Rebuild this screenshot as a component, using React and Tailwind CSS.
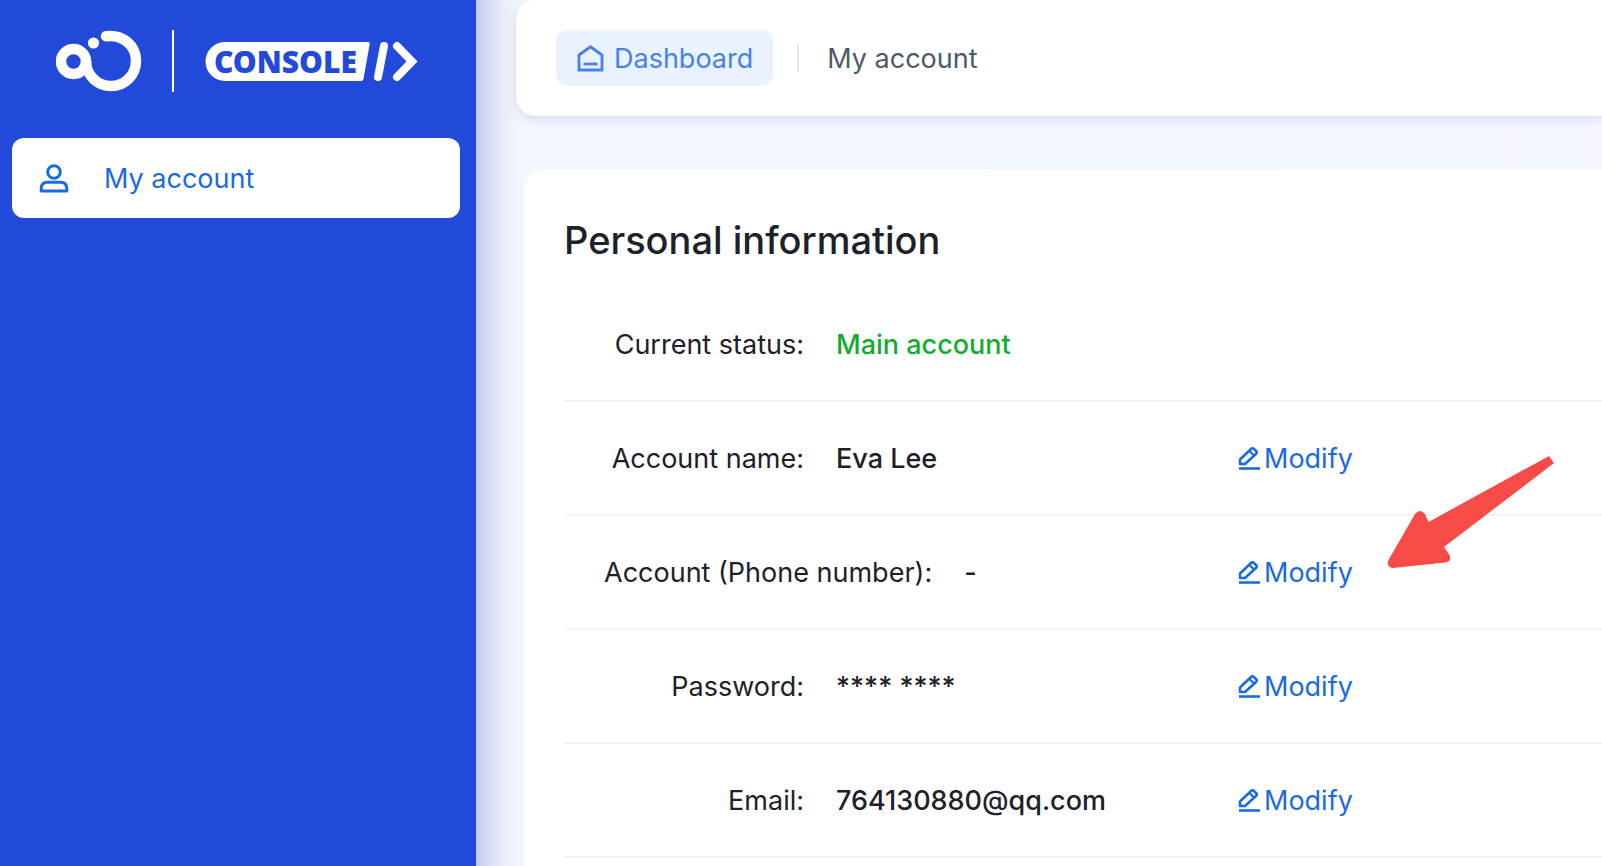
import React from "react";

const LogoMark = () => {
  return (
    <svg width="86" height="62" viewBox="0 0 86 62" fill="none">
      <circle cx="17.5" cy="31.5" r="12.5" stroke="#fff" strokeWidth="10.5" />
      <path
        d="M50 6.2 C67 4.2 80 15.5 80 31 A25 25 0 0 1 30 31"
        stroke="#fff"
        strokeWidth="10.5"
        strokeLinecap="round"
      />
      <circle cx="37.5" cy="13" r="5.6" fill="#fff" />
    </svg>
  );
};

const ConsoleLogo = () => {
  return (
    <svg width="214" height="42" viewBox="0 0 214 42" fill="none">
      <path
        d="M21 2 H164 Q166 2 165.7 4 L159.5 39 Q159 41 157 41 H21 A19.5 19.5 0 0 1 21 2 Z"
        fill="#fff"
      />
      <text
        x="10"
        y="33"
        fontFamily="Noto Sans, sans-serif"
        fontWeight="900"
        fontSize="30"
        fill="#2249da"
      >
        CONSOLE
      </text>
      <path
        d="M180 6 L174 37"
        stroke="#fff"
        strokeWidth="8"
        strokeLinecap="round"
      />
      <path
        d="M193 6 L208 21.5 L193 37"
        stroke="#fff"
        strokeWidth="8"
        strokeLinecap="round"
      />
    </svg>
  );
};

const UserIcon = () => {
  return (
    <svg width="30" height="30" viewBox="0 0 30 30" fill="none" stroke="currentColor" strokeWidth="3">
      <circle cx="15" cy="8" r="6.3" />
      <path d="M2.2 27 V24.5 Q2.2 18.2 8.5 18.2 H21.5 Q27.8 18.2 27.8 24.5 V27 Z" strokeLinejoin="round" />
    </svg>
  );
};

const HomeIcon = () => {
  return (
    <svg width="28" height="28" viewBox="0 0 28 28" fill="none" stroke="currentColor" strokeWidth="2.8">
      <path d="M3 10 L14.5 1.8 L26 10 V25 H3 Z" />
      <path d="M7.5 19 H21.5" />
    </svg>
  );
};

const EditIcon = () => {
  return (
    <svg width="24" height="24" viewBox="0 0 24 24" fill="none" stroke="currentColor" strokeWidth="2.6">
      <path
        d="M2 17 V12.5 L13.3 1.8 Q14.5 0.8 15.7 1.8 L18.2 4.2 Q19.3 5.5 18.2 6.7 L7 17 Z"
        strokeLinejoin="round"
      />
      <path d="M11.5 4 L16 8.5" strokeWidth="2.2" />
      <path d="M1 21.5 H22" />
    </svg>
  );
};

const rows = [
  { label: "Current status", value: "Main account", status: true },
  { label: "Account name", value: "Eva Lee", editable: true },
  { label: "Account (Phone number)", value: "-", editable: true },
  { label: "Password", value: "**** ****", editable: true },
  { label: "Email", value: "764130880@qq.com", editable: true },
];

const Sidebar = () => {
  return (
    <aside className="w-[476px] shrink-0 bg-[#2249da] px-3">
      <div className="flex h-[138px] items-start pt-7 pl-11">
        <div className="flex h-16 items-center pt-0.5">
          <LogoMark />
          <div className="mx-[30px] h-[62px] w-[2px] bg-white"></div>
          <ConsoleLogo />
        </div>
      </div>
      <nav className="pr-1">
        <a
          href="#account"
          className="flex h-20 items-center gap-[35px] rounded-xl bg-white pt-0.5 pl-[27px] text-[27px] text-[#1a6ae4]"
        >
          <UserIcon />
          My account
        </a>
      </nav>
    </aside>
  );
};

const Header = () => {
  return (
    <header className="ml-10 flex h-[116px] items-center rounded-l-[20px] bg-white pl-10 text-[27px] shadow-[0_4px_12px_rgba(0,0,0,0.1)]">
      <a
        href="#dashboard"
        className="flex h-14 items-center gap-[10px] rounded-xl bg-[#e8f3ff] px-5 pt-0.5 text-[#4a80ea]"
      >
        <HomeIcon />
        Dashboard
      </a>
      <div className="mx-6 h-7 w-[2px] bg-[#e5e6eb]"></div>
      <span className="pt-0.5 pl-1 text-[#4e5969]">My account</span>
    </header>
  );
};

const InfoRow = ({ row }) => {
  return (
    <div className="flex h-[114px] items-center border-b-2 border-[#f2f3f5] pt-0.5 text-[27px] text-[#1d2129]">
      <dl className="flex w-[674px] shrink-0 gap-8 pl-10">
        <dt className="min-w-[200px] text-right">{row.label}:</dt>
        <dd className={row.status ? "font-medium text-[#12ad2f]" : "font-medium"}>
          {row.value}
        </dd>
      </dl>
      {row.editable && (
        <button type="button" className="flex items-center gap-[2px] text-[#1a6ae4]">
          <EditIcon />
          Modify
        </button>
      )}
    </div>
  );
};

// hand drawn pointer towards the phone number row
const Pointer = () => {
  return (
    <svg
      className="pointer-events-none absolute top-[285px] left-[863px]"
      width="168"
      height="114"
      viewBox="0 0 168 114"
      fill="#f64b47"
    >
      <path d="M162 1 L167 8 L57 92 L62.5 100 Q65 107 58 107.5 L6 113 Q-1 112 1.5 105 L28 59 Q33 53 38 59 L41.5 67 Z" />
    </svg>
  );
};

const App = () => {
  return (
    <div className="flex h-screen overflow-hidden bg-[#f4f7ff] font-['Inter',sans-serif]">
      <Sidebar />
      <main className="min-w-0 flex-1 bg-[linear-gradient(to_right,#c3c9f1_0px,#d9ddf7_14px,#eaeefb_28px,#f3f7ff_44px,#f4f7ff_100%)]">
        <Header />
        <section className="relative mt-[54px] ml-12 rounded-tl-[20px] bg-white pt-[42px] pl-10">
          <h1 className="text-[38px] leading-[56px] font-medium text-[#1d2129]">
            Personal information
          </h1>
          <div className="mt-5">
            {rows.map((row) => (
              <InfoRow key={row.label} row={row}></InfoRow>
            ))}
          </div>
          <div className="h-20"></div>
          <Pointer />
        </section>
      </main>
    </div>
  );
};

export default App;
